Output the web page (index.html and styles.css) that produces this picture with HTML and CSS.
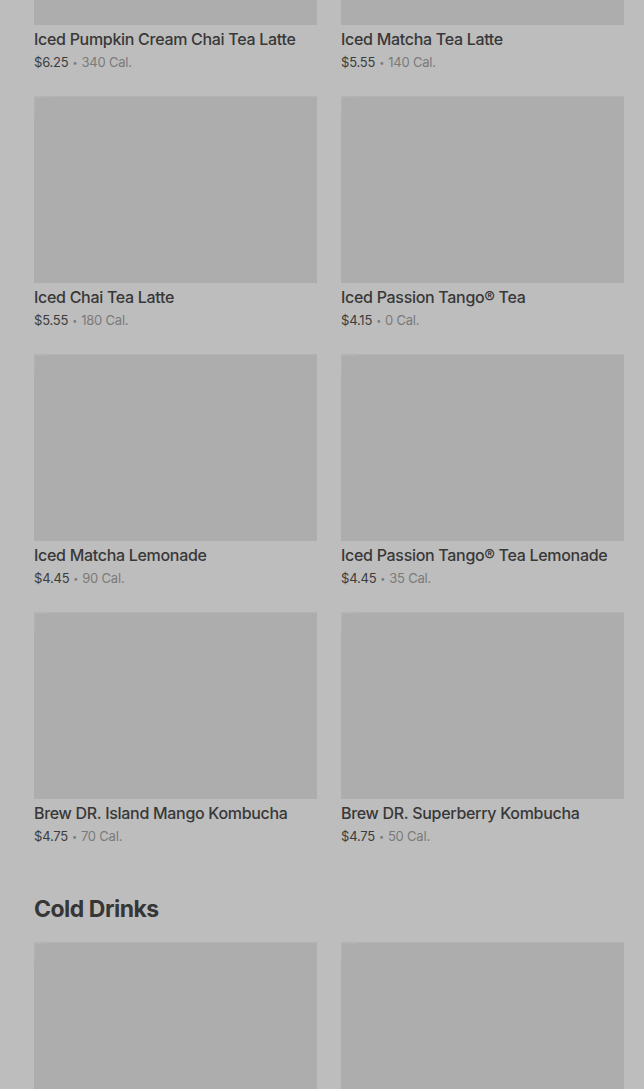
FILE: index.html
```html
<!DOCTYPE html>
<html lang="en">
<head>
  <meta charset="UTF-8" />
  <meta name="viewport" content="width=device-width, initial-scale=1.0"/>
  <title>Menu - Iced Teas</title>
  <link rel="stylesheet" href="styles.css">
</head>
<body>
  <div class="menu">
    <section class="category">
      <div class="products">
        <div class="product">
          <div class="thumb"><span class="thumb-mark"></span></div>
          <div class="name">Iced Pumpkin Cream Chai Tea Latte</div>
          <div class="meta"><span class="price">$6.25</span><span class="dot">&bull;</span><span class="cal">340 Cal.</span></div>
        </div>
        <div class="product">
          <div class="thumb"><span class="thumb-mark"></span></div>
          <div class="name">Iced Matcha Tea Latte</div>
          <div class="meta"><span class="price">$5.55</span><span class="dot">&bull;</span><span class="cal">140 Cal.</span></div>
        </div>
        <div class="product">
          <div class="thumb"><span class="thumb-mark"></span></div>
          <div class="name">Iced Chai Tea Latte</div>
          <div class="meta"><span class="price">$5.55</span><span class="dot">&bull;</span><span class="cal">180 Cal.</span></div>
        </div>
        <div class="product">
          <div class="thumb"><span class="thumb-mark"></span></div>
          <div class="name">Iced Passion Tango&reg; Tea</div>
          <div class="meta"><span class="price">$4.15</span><span class="dot">&bull;</span><span class="cal">0 Cal.</span></div>
        </div>
        <div class="product">
          <div class="thumb"><span class="thumb-mark"></span></div>
          <div class="name">Iced Matcha Lemonade</div>
          <div class="meta"><span class="price">$4.45</span><span class="dot">&bull;</span><span class="cal">90 Cal.</span></div>
        </div>
        <div class="product">
          <div class="thumb"><span class="thumb-mark"></span></div>
          <div class="name">Iced Passion Tango&reg; Tea Lemonade</div>
          <div class="meta"><span class="price">$4.45</span><span class="dot">&bull;</span><span class="cal">35 Cal.</span></div>
        </div>
        <div class="product">
          <div class="thumb"><span class="thumb-mark"></span></div>
          <div class="name">Brew DR. Island Mango Kombucha</div>
          <div class="meta"><span class="price">$4.75</span><span class="dot">&bull;</span><span class="cal">70 Cal.</span></div>
        </div>
        <div class="product">
          <div class="thumb"><span class="thumb-mark"></span></div>
          <div class="name">Brew DR. Superberry Kombucha</div>
          <div class="meta"><span class="price">$4.75</span><span class="dot">&bull;</span><span class="cal">50 Cal.</span></div>
        </div>
      </div>
    </section>

    <section class="category">
      <h2 class="category-title">Cold Drinks</h2>
      <div class="products">
        <div class="product">
          <div class="thumb"><span class="thumb-mark"></span></div>
        </div>
        <div class="product">
          <div class="thumb"><span class="thumb-mark"></span></div>
        </div>
      </div>
    </section>
  </div>
</body>
</html>
```

FILE: styles.css
```css
body {
  margin: 0;
  background: #bdbdbd;
  color: #393939;
  font-family: Inter, "Open Sans", Arial, sans-serif;
  height: 1089px;
  overflow: hidden;
}
.menu {
  /* page is scrolled partway into the iced tea list */
  margin-top: -162px;
  padding: 0 20px 0 34px;
}
.category {
  margin-bottom: 48px;
}
.category-title {
  margin: 0 0 17px 0;
  font-size: 23px;
  line-height: 32px;
  font-weight: 700;
  letter-spacing: -0.5px;
  color: #363636;
}
.products {
  display: grid;
  grid-template-columns: 283px 283px;
  column-gap: 24px;
  row-gap: 25px;
}
.thumb {
  height: 187px;
  background: #adadad;
  border-top: 1px solid #b3b3b3;
  box-sizing: border-box;
  position: relative;
}
.thumb-mark {
  position: absolute;
  left: 0;
  top: 0;
  width: 14px;
  height: 18px;
  border-left: 1px solid #b6b6b6;
  border-top: 1px solid #b6b6b6;
  opacity: 0.6;
}
.name {
  margin-top: 4px;
  font-size: 16px;
  line-height: 20px;
  font-weight: 500;
  letter-spacing: -0.3px;
  color: #383838;
  white-space: nowrap;
}
.meta {
  margin-top: 4px;
  height: 18px;
  font-size: 13px;
  line-height: 18px;
  letter-spacing: -0.2px;
}
.price {
  color: #3c3c3c;
}
.dot {
  margin: 0 4px;
  font-size: 9px;
  line-height: 0;
  vertical-align: 1px;
  color: #7c7c7c;
}
.cal {
  color: #7a7a7a;
}
```
